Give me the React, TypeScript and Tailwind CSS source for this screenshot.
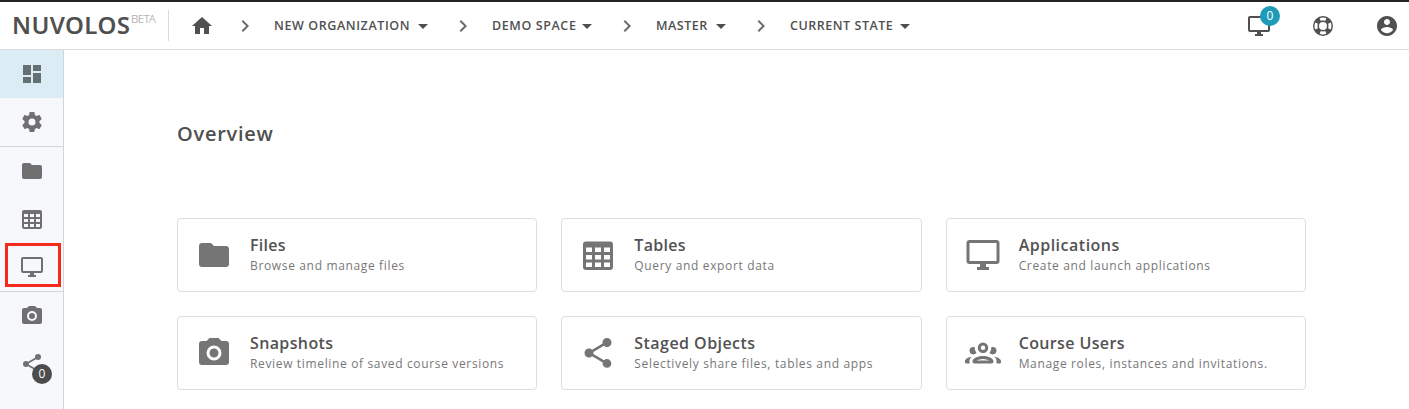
import type { ReactNode } from 'react';

const paths = {
  home: 'M10,20V14H14V20H19V12H22L12,3L2,12H5V20H10Z',
  chevron: 'M8.59,16.58L13.17,12L8.59,7.41L10,6L16,12L10,18L8.59,16.58Z',
  menuDown: 'M7,10L12,15L17,10H7Z',
  monitor:
    'M21,16H3V4H21M21,2H3C1.89,2 1,2.89 1,4V16A2,2 0 0,0 3,18H10V20H8V22H16V20H14V18H21A2,2 0 0,0 23,16V4C23,2.89 22.1,2 21,2Z',
  lifebuoy:
    'M19.79,15.41C20.74,13.24 20.74,10.75 19.79,8.59L17.05,9.83C17.65,11.21 17.65,12.78 17.06,14.17L19.79,15.41M15.42,4.21C13.25,3.26 10.76,3.26 8.59,4.21L9.83,6.94C11.22,6.35 12.79,6.35 14.18,6.95L15.42,4.21M4.21,8.58C3.26,10.76 3.26,13.24 4.21,15.42L6.95,14.17C6.35,12.79 6.35,11.21 6.95,9.82L4.21,8.58M8.59,19.79C10.76,20.74 13.25,20.74 15.42,19.78L14.18,17.05C12.8,17.65 11.22,17.65 9.84,17.06L8.59,19.79M12,2A10,10 0 0,1 22,12A10,10 0 0,1 12,22A10,10 0 0,1 2,12A10,10 0 0,1 12,2M12,8A4,4 0 0,0 8,12A4,4 0 0,0 12,16A4,4 0 0,0 16,12A4,4 0 0,0 12,8Z',
  account:
    'M12 2C6.48 2 2 6.48 2 12s4.48 10 10 10 10-4.48 10-10S17.52 2 12 2zm0 3c1.66 0 3 1.34 3 3s-1.34 3-3 3-3-1.34-3-3 1.34-3 3-3zm0 14.2c-2.5 0-4.71-1.28-6-3.22.03-1.99 4-3.08 6-3.08 1.99 0 5.97 1.09 6 3.08-1.29 1.94-3.5 3.22-6 3.22z',
  dashboard: 'M13,3V9H21V3M13,21H21V11H13M3,21H11V15H3M3,13H11V3H3V13Z',
  cog: 'M12,15.5A3.5,3.5 0 0,1 8.5,12A3.5,3.5 0 0,1 12,8.5A3.5,3.5 0 0,1 15.5,12A3.5,3.5 0 0,1 12,15.5M19.43,12.97C19.47,12.65 19.5,12.33 19.5,12C19.5,11.67 19.47,11.34 19.43,11L21.54,9.37C21.73,9.22 21.78,8.95 21.66,8.73L19.66,5.27C19.54,5.05 19.27,4.96 19.05,5.05L16.56,6.05C16.04,5.66 15.5,5.32 14.87,5.07L14.5,2.42C14.46,2.18 14.25,2 14,2H10C9.75,2 9.54,2.18 9.5,2.42L9.13,5.07C8.5,5.32 7.96,5.66 7.44,6.05L4.95,5.05C4.73,4.96 4.46,5.05 4.34,5.27L2.34,8.73C2.21,8.95 2.27,9.22 2.46,9.37L4.57,11C4.53,11.34 4.5,11.67 4.5,12C4.5,12.33 4.53,12.65 4.57,12.97L2.46,14.63C2.27,14.78 2.21,15.05 2.34,15.27L4.34,18.73C4.46,18.95 4.73,19.03 4.95,18.95L7.44,17.94C7.96,18.34 8.5,18.68 9.13,18.93L9.5,21.58C9.54,21.82 9.75,22 10,22H14C14.25,22 14.46,21.82 14.5,21.58L14.87,18.93C15.5,18.67 16.04,18.34 16.56,17.94L19.05,18.95C19.27,19.03 19.54,18.95 19.66,18.73L21.66,15.27C21.78,15.05 21.73,14.78 21.54,14.63L19.43,12.97Z',
  folder: 'M10,4H4C2.89,4 2,4.89 2,6V18A2,2 0 0,0 4,20H20A2,2 0 0,0 22,18V8C22,6.89 21.1,6 20,6H12L10,4Z',
  table:
    'M4,3H20A2,2 0 0,1 22,5V20A2,2 0 0,1 20,22H4A2,2 0 0,1 2,20V5A2,2 0 0,1 4,3M4,7V10H8V7H4M10,7V10H14V7H10M20,10V7H16V10H20M4,12V15H8V12H4M4,20H8V17H4V20M10,12V15H14V12H10M10,20H14V17H10V20M20,20V17H16V20H20M20,12H16V15H20V12Z',
  camera:
    'M4,4H7L9,2H15L17,4H20A2,2 0 0,1 22,6V18A2,2 0 0,1 20,20H4A2,2 0 0,1 2,18V6A2,2 0 0,1 4,4M12,7A5,5 0 0,0 7,12A5,5 0 0,0 12,17A5,5 0 0,0 17,12A5,5 0 0,0 12,7M12,9A3,3 0 0,1 15,12A3,3 0 0,1 12,15A3,3 0 0,1 9,12A3,3 0 0,1 12,9Z',
  share:
    'M18,16.08C17.24,16.08 16.56,16.38 16.04,16.85L8.91,12.7C8.96,12.47 9,12.24 9,12C9,11.76 8.96,11.53 8.91,11.3L15.96,7.19C16.5,7.69 17.21,8 18,8A3,3 0 0,0 21,5A3,3 0 0,0 18,2A3,3 0 0,0 15,5C15,5.24 15.04,5.47 15.09,5.7L8.04,9.81C7.5,9.31 6.79,9 6,9A3,3 0 0,0 3,12A3,3 0 0,0 6,15C6.79,15 7.5,14.69 8.04,14.19L15.16,18.34C15.11,18.55 15.08,18.77 15.08,19C15.08,20.61 16.39,21.91 18,21.91C19.61,21.91 20.92,20.61 20.92,19A2.92,2.92 0 0,0 18,16.08Z',
  group:
    'M12,5A3.5,3.5 0 0,0 8.5,8.5A3.5,3.5 0 0,0 12,12A3.5,3.5 0 0,0 15.5,8.5A3.5,3.5 0 0,0 12,5M12,7A1.5,1.5 0 0,1 13.5,8.5A1.5,1.5 0 0,1 12,10A1.5,1.5 0 0,1 10.5,8.5A1.5,1.5 0 0,1 12,7M5.5,8A2.5,2.5 0 0,0 3,10.5C3,11.44 3.53,12.25 4.29,12.68C4.65,12.88 5.06,13 5.5,13C5.94,13 6.35,12.88 6.71,12.68C7.08,12.47 7.39,12.17 7.62,11.81C6.89,10.86 6.5,9.7 6.5,8.5C6.5,8.41 6.5,8.31 6.5,8.22C6.2,8.08 5.86,8 5.5,8M18.5,8C18.14,8 17.8,8.08 17.5,8.22C17.5,8.31 17.5,8.41 17.5,8.5C17.5,9.7 17.11,10.86 16.38,11.81C16.5,12 16.63,12.15 16.78,12.3C16.94,12.45 17.1,12.58 17.29,12.68C17.65,12.88 18.06,13 18.5,13C18.94,13 19.35,12.88 19.71,12.68C20.47,12.25 21,11.44 21,10.5A2.5,2.5 0 0,0 18.5,8M12,14C9.66,14 5,15.17 5,17.5C5,18.4 5.5,19 6.3,19H17.7C18.5,19 19,18.4 19,17.5C19,15.17 14.34,14 12,14M4.71,14.55C2.78,14.78 0,15.76 0,17.5V18.2C0,18.7 0.3,19 0.8,19H3V17.07C3,16.06 3.69,15.22 4.71,14.55M19.29,14.55C20.31,15.22 21,16.06 21,17.07V19H23.2C23.7,19 24,18.7 24,18.2V17.5C24,15.76 21.22,14.78 19.29,14.55M12,16C13.53,16 15.24,16.5 16.23,17H7.77C8.76,16.5 10.47,16 12,16Z',
};

type IconName = keyof typeof paths;

function Icon({ name, className = 'size-6' }: { name: IconName; className?: string }) {
  return (
    <svg viewBox="0 0 24 24" fill="currentColor" fillRule="evenodd" className={`block shrink-0 ${className}`}>
      <path d={paths[name]} />
    </svg>
  );
}

function Crumb({ label, box }: { label: string; box: string }) {
  return (
    <div className="flex items-center">
      <Icon name="chevron" className="size-6 text-[#6b6b6b]" />
      <div className={`ml-[17px] whitespace-nowrap text-[12.5px] leading-5 font-semibold ${box}`}>{label}</div>
      <Icon name="menuDown" />
    </div>
  );
}

function NavItem({ icon, className = '', children }: { icon: IconName; className?: string; children?: ReactNode }) {
  return (
    <div className={`relative flex h-12 shrink-0 items-center justify-center ${className}`}>
      <Icon name={icon} />
      {children}
    </div>
  );
}

function Card({ icon, title, text, ts }: { icon: IconName; title: string; text: string; ts: string }) {
  return (
    <div className="flex h-[74px] items-center rounded border border-[#dedede] pl-[18px]">
      <Icon name={icon} className="size-9" />
      <div className="ml-[18px] whitespace-nowrap">
        <div className={`-mt-px text-[16px] leading-[22px] font-semibold text-[#525252] ${ts}`}>{title}</div>
        <div className="text-[12px] leading-5 tracking-[0.65px] text-[#777]">{text}</div>
      </div>
    </div>
  );
}

export default function App() {
  return (
    <div className="flex h-[409px] w-[1409px] flex-col overflow-hidden bg-white font-['Open_Sans','Noto_Sans',sans-serif] text-[#505050]">
      <header className="flex h-[50px] shrink-0 items-center border-t-2 border-b border-t-[#252328] border-b-[#dcdcdc]">
        <div className="-mt-0.5 flex w-[168px] items-start pl-3">
          <span className="w-[119px] font-['Noto_Sans'] text-[24px] leading-8 font-semibold tracking-[0.4px]">NUVOLOS</span>
          <span className="pt-1 font-['Noto_Sans'] text-[11.5px] leading-3 font-light tracking-[-0.4px] text-[#999]">BETA</span>
        </div>
        <div className="h-[31px] w-px bg-[#dcdcdc]" />
        <Icon name="home" className="ml-[21px] size-6" />
        <nav className="ml-[19px] flex gap-4">
          <Crumb label="NEW ORGANIZATION" box="w-[137px] tracking-[0.6px]" />
          <Crumb label="DEMO SPACE" box="w-[83px] tracking-[0.6px]" />
          <Crumb label="MASTER" box="w-[53px] tracking-[0.5px]" />
          <Crumb label="CURRENT STATE" box="w-[103px] tracking-[0.53px]" />
        </nav>
        <div className="mr-2.5 ml-auto flex gap-10">
          <div className="relative">
            <Icon name="monitor" />
            <span className="absolute -top-2 left-[13px] flex size-5 items-center justify-center rounded-full bg-[#1e9bb8] text-[12px] text-white">0</span>
          </div>
          <Icon name="lifebuoy" />
          <Icon name="account" />
        </div>
      </header>
      <div className="flex min-h-0 flex-1">
        <aside className="flex w-16 shrink-0 flex-col border-r border-[#d3d5d8] bg-[#f6f8fb] text-[#707070]">
          <NavItem icon="dashboard" className="bg-[#dcecf4] text-[#657072]" />
          <NavItem icon="cog" />
          <div className="h-px shrink-0 bg-[#d3d5d8]" />
          <NavItem icon="folder" />
          <NavItem icon="table" />
          <NavItem icon="monitor">
            <div className="absolute top-0 left-[5px] h-11 w-14 border-3 border-[#f52a1c]" />
          </NavItem>
          <div className="h-px shrink-0 bg-[#d3d5d8]" />
          <NavItem icon="camera" />
          <NavItem icon="share">
            <span className="absolute top-6 left-8 flex size-5 items-center justify-center rounded-full bg-[#4c4c4c] text-[12px] text-white">0</span>
          </NavItem>
        </aside>
        <main className="flex-1 pt-[70px] pr-[103px] pl-[113px] text-[#757575]">
          <h1 className="text-[20px] leading-7 font-semibold tracking-[0.75px] text-[#505050]">Overview</h1>
          <div className="mt-[70px] grid grid-cols-3 gap-6">
            <Card icon="folder" title="Files" text="Browse and manage files" ts="tracking-[0.3px]" />
            <Card icon="table" title="Tables" text="Query and export data" ts="tracking-[0.3px]" />
            <Card icon="monitor" title="Applications" text="Create and launch applications" ts="tracking-[0.5px]" />
            <Card icon="camera" title="Snapshots" text="Review timeline of saved course versions" ts="tracking-[0.37px]" />
            <Card icon="share" title="Staged Objects" text="Selectively share files, tables and apps" ts="tracking-[0.45px]" />
            <Card icon="group" title="Course Users" text="Manage roles, instances and invitations." ts="tracking-[0.37px]" />
          </div>
        </main>
      </div>
    </div>
  );
}
